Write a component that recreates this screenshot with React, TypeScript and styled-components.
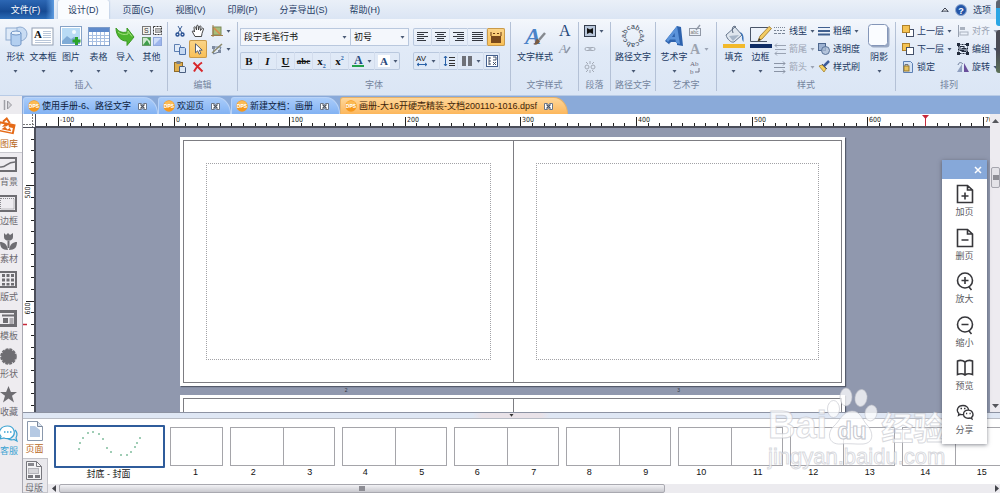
import React from "react";
import styled, { createGlobalStyle, css } from "styled-components";

const Global = createGlobalStyle`
  * { box-sizing: border-box; }
  html, body { margin: 0; height: 100%; }
  #root { height: 100%; }
  body {
    font: 9px/12px "Liberation Sans", "Noto Sans CJK SC", sans-serif;
    color: #1d3a63;
    overflow: hidden;
  }
  button, select {
    font: inherit;
    color: inherit;
    margin: 0;
    padding: 0;
    border: 0;
    background: none;
  }
  button { cursor: pointer; white-space: nowrap; }
  svg { display: block; flex: none; overflow: visible; }
`;

/* ---------- shell ---------- */

const Window = styled.div`
  position: relative;
  display: flex;
  flex-direction: column;
  height: 100%;
  min-height: 480px;
  overflow: hidden;
  background: #dfe8f6;
`;

const MenuBar = styled.nav`
  display: flex;
  height: 19px;
  flex: none;
  background: linear-gradient(#eaf0f8, #dbe5f4);
`;

const FileTab = styled.button`
  width: 54px;
  margin-right: 4px;
  padding-right: 3px;
  color: #fff;
  background: linear-gradient(90deg, transparent 85%, #5d9be0), linear-gradient(#2c67b4, #164a93 60%, #2a6cb8);
`;

const MenuItem = styled.button<{ $active?: boolean }>`
  padding: 0 11px;
  ${(p) =>
    p.$active &&
    css`
      padding: 0 10px;
      margin-right: 3px;
      background: #fafcff;
      border-radius: 2px 2px 0 0;
      box-shadow: 0 0 2px #8ca6cc;
    `}
`;

const MenuTools = styled.div`
  display: flex;
  align-items: center;
  gap: 6px;
  margin-left: auto;
  padding-right: 9px;
`;

const Ribbon = styled.div`
  display: flex;
  flex: none;
  height: 77px;
  padding: 3px 0 4px;
  overflow: hidden;
  background: linear-gradient(#f4f7fc, #e1eaf7 40%, #dbe6f5);
  border-bottom: 1px solid #b8cbe6;
`;

const GroupBox = styled.section<{ $w: number }>`
  display: flex;
  flex-direction: column;
  flex: none;
  width: ${(p) => p.$w}px;
  border-right: 1px solid #b4c1d6;
`;

const GroupBody = styled.div<{ $pad?: number }>`
  display: flex;
  height: 57px;
  padding-left: ${(p) => p.$pad ?? 2}px;
`;

const Caption = styled.div`
  text-align: center;
  color: #74849d;
`;

const BigButton = styled.button<{ $w?: number }>`
  display: flex;
  flex-direction: column;
  align-items: center;
  width: ${(p) => p.$w ?? 27}px;
  height: 54px;
  padding-top: 2px;
  gap: 3px;
  & > svg:last-child:not(:first-child) { margin-top: 4px; }
`;

const SmallGrid = styled.div<{ $cols: string }>`
  display: grid;
  grid-template-columns: ${(p) => p.$cols};
  grid-auto-rows: 18px;
`;

const SmallButton = styled.button<{ $on?: boolean; $off?: boolean }>`
  display: flex;
  align-items: center;
  gap: 3px;
  color: ${(p) => (p.$off ? "#9aa3b3" : "inherit")};
  ${(p) =>
    p.$on &&
    css`
      justify-content: center;
      background: linear-gradient(#fbd58a, #f9bf55);
      box-shadow: inset 0 0 0 1px #c99a4a;
      border-radius: 2px;
    `}
`;

const IconButton = styled(SmallButton)`
  justify-content: center;
`;

const FontGrid = styled.div`
  display: grid;
  grid-template-columns: 169px 92px;
  grid-auto-rows: 18px;
  gap: 6px 4px;
  padding-top: 6px;
  justify-items: start;
`;

const ToolStrip = styled.div<{ $cols: string }>`
  display: grid;
  grid-template-columns: ${(p) => p.$cols};
  height: 18px;
  border-radius: 2px;
  box-shadow: inset 0 0 0 1px #b9c8de;
  & > * + * { border-left: 1px solid #d3dded; }
`;

const Combos = styled.div`
  display: flex;
  width: 100%;
`;

const Combo = styled.div<{ $w: number }>`
  display: flex;
  align-items: center;
  width: ${(p) => p.$w}px;
  height: 18px;
  padding: 0 3px;
  background: #f4f7fc;
  border: 1px solid #b9c8de;
  color: #111;
  select {
    flex: 1;
    min-width: 0;
    appearance: none;
    outline: 0;
  }
  & + & { border-left: 0; }
`;

const Glyph = styled.span<{ $kind?: "italic" | "under" | "strike" }>`
  font: 700 11px/12px "Liberation Serif", serif;
  color: #111;
  ${(p) => p.$kind === "italic" && "font-style: italic;"}
  ${(p) => p.$kind === "under" && "text-decoration: underline;"}
  ${(p) => p.$kind === "strike" && "font-size: 9px; text-decoration: line-through;"}
  sub, sup { font-size: 6px; line-height: 0; color: #2a62a8; }
`;

/* ---------- document tabs ---------- */

const TabRow = styled.div`
  display: flex;
  flex: none;
  height: 18px;
  background: #8aaad9;
`;

const Expander = styled.button`
  display: grid;
  place-items: center;
  width: 22px;
  margin-right: 1px;
  padding-right: 6px;
  background: #ecebef;
`;

const DocTab = styled.div<{ $active?: boolean }>`
  display: flex;
  align-items: center;
  gap: 7px;
  height: 17px;
  margin-top: 1px;
  padding: 0 ${(p) => (p.$active ? 14 : 10)}px 0 4px;
  border: 1px solid ${(p) => (p.$active ? "#e6b169" : "#b9d3f7")};
  border-bottom: 0;
  border-radius: 3px 14px 0 0 / 3px 17px 0 0;
  color: ${(p) => (p.$active ? "#3d1f0a" : "#0c1c3c")};
  background: ${(p) => (p.$active ? "linear-gradient(#ffd79a, #fcb75c)" : "linear-gradient(#a9ccfa, #82b2f3)")};
`;

const TabLabel = styled.button`
  display: flex;
  align-items: center;
  gap: 2px;
`;

/* ---------- workspace ---------- */

const Workspace = styled.div`
  display: flex;
  flex: 1;
  min-height: 0;
`;

const Sidebar = styled.nav`
  display: flex;
  flex-direction: column;
  flex: none;
  width: 23px;
  padding-bottom: 34px;
  background: #eeecf0;
  border-right: 1px solid #a9a9b2;
`;

const SideItem = styled.button<{ $tone?: string; $active?: boolean }>`
  display: flex;
  flex-direction: column;
  align-items: flex-start;
  flex: 1;
  gap: 3px;
  padding-top: 4px;
  color: ${(p) => p.$tone ?? "#6c6a70"};
  ${(p) => p.$active && "background: #fff; box-shadow: 0 1px 0 #c9c9cf;"}
`;

const MainColumn = styled.main`
  display: flex;
  flex-direction: column;
  flex: 1;
  min-width: 0;
`;

const EditArea = styled.div`
  display: grid;
  grid-template: 14px minmax(0, 1fr) / 13px minmax(0, 1fr) 10px;
  flex: 1;
  min-height: 0;
`;

const RulerCell = styled.div<{ $side?: "top" | "left" }>`
  overflow: hidden;
  background: #fff;
  ${(p) => p.$side === "top" && "border-bottom: 2px solid #4b4e5a;"}
  ${(p) => p.$side === "left" && "border-right: 2px solid #4b4e5a;"}
  text { font: 7px "DejaVu Sans Condensed", "Liberation Sans", sans-serif; fill: #222; }
`;

const Canvas = styled.div`
  overflow: hidden;
  padding: 9px 145px 0 144px;
  background: #9098ae;
`;

const VScroll = styled.div`
  display: flex;
  flex-direction: column;
  align-items: center;
  grid-column: 3;
  grid-row: 1 / 3;
  padding: 5px 0 4px;
  background: #edebf0;
`;

const VThumb = styled.div`
  display: grid;
  place-items: center;
  width: 9px;
  height: 21px;
  margin: 44px 0 auto 1px;
  background: #e4e3e8;
  border: 1px solid #a6a6ae;
  border-radius: 2px;
`;

const Sheet = styled.div`
  aspect-ratio: 665 / 249;
  padding: 3px;
  background: #fff;
  box-shadow: 1px 1px 1px #555b6b;
`;

const Spread = styled.div`
  display: grid;
  grid-template-columns: 1fr 1fr;
  height: 100%;
  border: 1px solid #7d7d82;
`;

const Leaf = styled.div`
  padding: 22px;
  & + & { border-left: 1px solid #7d7d82; }
`;

const Margins = styled.div`
  height: 100%;
  border: 1px dotted #a2a2a6;
`;

const SheetNumbers = styled.div`
  display: grid;
  grid-template-columns: 1fr 1fr;
  height: 9px;
  text-align: center;
  font-size: 5px;
  line-height: 8px;
  color: #33363f;
`;

const Splitter = styled.div`
  display: grid;
  place-items: center;
  flex: none;
  height: 7px;
  border-top: 1px solid #8d93a3;
  border-bottom: 1px solid #b9bdc6;
  background: linear-gradient(90deg, #dfe7f4 46%, #e9e2e8 47%, #e9e2e8 53%, #dfe7f4 54%);
`;

/* ---------- page strip ---------- */

const Strip = styled.div`
  display: flex;
  flex: none;
  background: #fff;
`;

const StripTabs = styled.div`
  display: flex;
  flex-direction: column;
  flex: none;
  width: 25px;
`;

const StripTab = styled.button<{ $active?: boolean }>`
  display: flex;
  flex-direction: column;
  align-items: center;
  gap: 2px;
  height: ${(p) => (p.$active ? 39 : 35)}px;
  padding: 2px 2px 0 0;
  color: ${(p) => (p.$active ? "#b8671a" : "#6f6f75")};
  background: ${(p) => (p.$active ? "#fff" : "#e9e8ec")};
  ${(p) => !p.$active && "border: 1px solid #c4c4ca; border-left: 0;"}
`;

const StripBody = styled.div`
  display: flex;
  flex-direction: column;
  flex: 1;
  min-width: 0;
`;

const Thumbs = styled.div`
  display: flex;
  flex: 1;
  overflow: hidden;
  gap: 7px;
  padding: 6px 0 0 6px;
  color: #111;
`;

const ThumbItem = styled.figure<{ $w: number; $cover?: boolean }>`
  flex: none;
  width: ${(p) => p.$w}px;
  margin: ${(p) => (p.$cover ? "0 -2px 0 0" : "2px 0 0")};
`;

const ThumbFrame = styled.div<{ $cols: number; $selected?: boolean }>`
  display: grid;
  grid-template-columns: repeat(${(p) => p.$cols}, 1fr);
  place-items: stretch;
  height: ${(p) => (p.$selected ? 43 : 39)}px;
  border: ${(p) => (p.$selected ? "2px solid #2f5c9b" : "1px solid #a5a5aa")};
  border-radius: ${(p) => (p.$selected ? 1 : 0)}px;
  & > span + span { border-left: 1px solid #a5a5aa; }
`;

const ThumbLabels = styled.figcaption<{ $cols: number }>`
  display: grid;
  grid-template-columns: repeat(${(p) => p.$cols}, 1fr);
  margin: 0 -3px 0 -5px;
  padding-top: 1px;
  text-align: center;
  line-height: 11px;
`;

const HScroll = styled.div`
  display: flex;
  align-items: center;
  flex: none;
  height: 9px;
  padding: 0 1px 0 4px;
  background: #ecebef;
`;

const HThumb = styled.div`
  display: grid;
  place-items: center;
  width: 64%;
  height: 9px;
  margin: 0 auto 0 3px;
  background: linear-gradient(#f2f2f5, #c9c9cf);
  border: 1px solid #a9a9b0;
  border-radius: 2px;
`;

const Grip = styled.i`
  width: 6px;
  height: 5px;
  background: #8d8d94;
`;

/* ---------- floating layers ---------- */

const Palette = styled.aside`
  position: absolute;
  top: 160px;
  right: 13px;
  z-index: 3;
  width: 45px;
  background: #fff;
  box-shadow: 0 1px 4px rgba(40, 45, 60, 0.55);
`;

const PaletteHead = styled.div`
  display: flex;
  justify-content: flex-end;
  align-items: center;
  height: 19px;
  padding-right: 5px;
  background: #86a8d9;
`;

const PaletteList = styled.div`
  display: flex;
  flex-direction: column;
  height: 265px;
  padding-bottom: 4px;
`;

const PaletteItem = styled.button`
  display: flex;
  flex-direction: column;
  align-items: center;
  flex: 1;
  gap: 3px;
  padding-top: 6px;
  color: #5b5b5f;
`;

const Watermark = styled.div`
  position: absolute;
  right: 53px;
  bottom: 24px;
  z-index: 2;
  width: 179px;
  color: rgba(255, 255, 255, 0.75);
  -webkit-text-stroke: 1px rgba(190, 192, 200, 0.6);
  pointer-events: none;
`;

const MarkRow = styled.div`
  display: flex;
  align-items: flex-end;
  height: 58px;
  font: 700 38px/40px "Liberation Sans", sans-serif;
`;

const MarkCjk = styled.span`
  margin-left: 4px;
  font: 700 32px/38px "Noto Sans CJK SC", sans-serif;
`;

const MarkUrl = styled.div`
  font: 22px/24px "Liberation Sans", sans-serif;
`;

const EdgeWidget = styled.div`
  position: absolute;
  top: 0;
  right: 0;
  z-index: 4;
  display: flex;
  flex-direction: column;
  gap: 4px;
  width: 4px;
`;

const EdgeBlock = styled.i<{ $h: number; $bg: string }>`
  height: ${(p) => p.$h}px;
  border-radius: 3px 0 0 3px;
  background: ${(p) => p.$bg};
`;

/* ---------- icons ---------- */

const Svg = ({ w, h = w, children, ...rest }: { w: number; h?: number; children: React.ReactNode } & React.SVGProps<SVGSVGElement>) => (
  <svg width={w} height={h} viewBox={`0 0 ${w} ${h}`} fill="none" aria-hidden {...rest}>
    {children}
  </svg>
);

const Arrow = ({ c = "#4a5a75" }: { c?: string }) => (
  <Svg w={5} h={3}><path d="M0.5 0h4L2.5 2.8z" fill={c} /></Svg>
);

const big = {
  shape: (
    <Svg w={24}>
      <circle cx="16" cy="10" r="7" fill="#c9dcf3" stroke="#8fabd0" />
      <rect x="2" y="4" width="11" height="12" fill="#dfeaf8" stroke="#8fabd0" />
      <path d="M7 9v11c0 2.600 10 2.600 10 0V9z" fill="#b3cff0" stroke="#7195c6" />
      <ellipse cx="12" cy="9" rx="5" ry="2" fill="#e7f1fc" stroke="#7195c6" />
    </Svg>
  ),
  textbox: (
    <Svg w={24}>
      <rect x="1" y="4" width="21" height="17" fill="#fff" stroke="#93a0b3" />
      <text x="3" y="14" fontSize="11" fontWeight="700" fontFamily="Liberation Serif" fill="#111">A</text>
      <path d="M12 7.500h8M12 9.500h8M12 11.500h8M12 13.500h8M4 16.500h16M4 18.500h16" stroke="#b9c6d8" />
    </Svg>
  ),
  picture: (
    <Svg w={24}>
      <rect x="1.500" y="2.500" width="21" height="19" fill="#fff" stroke="#86a2c6" />
      <rect x="3" y="4" width="18" height="16" fill="#b9dbf5" />
      <path d="M3 17l5-5 4 3 3-2 6 4v3H3z" fill="#7fabd6" />
      <circle cx="15" cy="8" r="2" fill="#f4fbff" />
      <path d="M17.500 13v8M13.500 17h8" stroke="#2aa32a" strokeWidth="3" />
    </Svg>
  ),
  table: (
    <Svg w={24}>
      <rect x="1.500" y="3.500" width="21" height="18" fill="#fff" stroke="#7d9cc9" />
      <rect x="2" y="4" width="20" height="4" fill="#5f8acb" />
      <path d="M5.500 8v13M9.500 8v13M13.500 8v13M17.500 8v13M2 11.500h20M2 14.500h20M2 17.500h20" stroke="#a9c0e2" />
    </Svg>
  ),
  import: (
    <Svg w={24}>
      <path d="M3 4c3 4 6 5 11 4V4l7 9-7 8.500V17C8 17.500 3 12 3 4z" fill="#4db52f" stroke="#3c9a24" />
      <path d="M5 8c3 2.500 6 3 10 2V7l4 5.500" stroke="#a3e07e" />
    </Svg>
  ),
  other: (
    <Svg w={24}>
      <rect x="2.500" y="2.500" width="8" height="8" fill="#f2f2ee" stroke="#777" />
      <text x="4" y="9" fontSize="7" fontFamily="Liberation Sans" fill="#333">S</text>
      <rect x="13.500" y="2.500" width="8" height="8" fill="#fff" stroke="#333" strokeDasharray="2 1" />
      <path d="M15.500 4.500h5v4h-5z" fill="#bbb" stroke="#555" strokeDasharray="1 1" />
      <rect x="2.500" y="13.500" width="8" height="8" fill="#cfe8cf" stroke="#6a9a6a" />
      <path d="M3 21l4-5 3 5zM7 14h3v3z" fill="#3f9e4a" />
      <rect x="13.500" y="13.500" width="8" height="8" fill="#cddcf8" stroke="#90a8dc" />
      <path d="M14 21l7-7v7z" fill="#9db5ec" />
    </Svg>
  ),
  textStyle: (
    <Svg w={24}>
      <text x="2" y="20" fontSize="24" fontWeight="700" fontFamily="Liberation Serif" fontStyle="italic" fill="#4b83c8">A</text>
      <path d="M22 9l-6 7" stroke="#85898f" strokeWidth="2.500" />
      <path d="M14 14.500l3 2.500c-1 3.500-4 4-6.500 3.500 2-1 1.500-4 3.500-6z" fill="#7a5c42" />
    </Svg>
  ),
  pathText: (
    <Svg w={24}>
      <g fontSize="7" fontFamily="Liberation Sans" fill="#2e3a4d" textAnchor="middle">
        {"abcabcabcabc".split("").map((ch, i) => (
          <text key={i} x="12" y="5" transform={`rotate(${i * 30} 12 12)`}>{ch}</text>
        ))}
      </g>
    </Svg>
  ),
  wordArt: (
    <Svg w={24}>
      <path d="M3 17L15 2l4 1 2 19-6-1v-3H9l-2 2 1 1z" fill="#2d62ad" />
      <path d="M4 16L15 2l3 18-4-1-.5-3.500H8L6 18zM10 13h3l-.5-4z" fill="#5b93da" fillRule="evenodd" />
    </Svg>
  ),
  fill: (
    <Svg w={24}>
      <path d="M4 11l9-8 7 8-8 7c-3 1-7-3-8-7z" fill="#dfe6ee" stroke="#66768c" />
      <path d="M7 12l10-1-6 6z" fill="#a7b6c8" />
      <path d="M11 9c-2-6 1-8 3-6" stroke="#55647a" />
      <path d="M18 8c3 1 4 4 3.500 10-1-1-2-4-1.500-6z" fill="#3b73b9" />
      <rect x="1" y="20" width="22" height="4" fill="#f2b92b" />
    </Svg>
  ),
  border: (
    <Svg w={24}>
      <path d="M19 3.500H1.500v14H18" stroke="#4a5568" />
      <path d="M9 17l2-5 9-9.500 2.500 2L13 15z" fill="#f3cc63" stroke="#98711f" strokeWidth=".8" />
      <path d="M9 17l1-3 2 2z" fill="#333" />
      <rect x="1" y="20" width="22" height="4" fill="#0f2d66" />
    </Svg>
  ),
  shadow: (
    <Svg w={24}>
      <rect x="3.500" y="2.500" width="19" height="21" rx="3" fill="#9aa9c4" />
      <rect x="1.500" y=".5" width="19" height="21" rx="3" fill="#fafcff" stroke="#8496b8" />
    </Svg>
  ),
};

const small = {
  cut: <Svg w={12}><path d="M4 1l4 7M8 1L4 8" stroke="#3c5f96" /><circle cx="3.500" cy="9.500" r="1.500" stroke="#264f92" strokeWidth="1.400" /><circle cx="8.500" cy="9.500" r="1.500" stroke="#264f92" strokeWidth="1.400" /></Svg>,
  hand: <Svg w={14}><path d="M4 12.500L1.500 8C1 6.500 2.500 6.500 3.500 8L3 3.500c0-1 1.500-1 1.700 0L5.500 6l.2-4c0-1 1.500-1 1.600 0L7.500 6l1-3.500c.2-1 1.600-.8 1.500.3L9.500 6.500l1.500-2c.5-.8 1.700-.3 1.500.5L11 9.500l-.5 3z" fill="#fff" stroke="#333" strokeWidth=".9" /></Svg>,
  crop: <Svg w={12}><rect x="2" y="2" width="8" height="8" fill="#a8bd79" stroke="#7d8a5a" /><path d="M0 10.500h12M2 0v12" stroke="#a07c4a" /><path d="M3 3l6 6" stroke="#e0874a" strokeWidth="1.500" /></Svg>,
  copy: <Svg w={12}><path d="M.5 1.500h5l1 1v6h-6z" fill="#dfeaf8" stroke="#5d7fb2" /><path d="M5.500 4.500h5l1 1v6h-6z" fill="#c5d8f1" stroke="#4a70aa" /></Svg>,
  pointer: <Svg w={12}><path d="M3.500.8v9l2.200-2 1.500 3.400 1.600-.8-1.500-3.200h2.900z" fill="#fff" stroke="#44506a" strokeWidth=".9" /></Svg>,
  node: <Svg w={12}><path d="M2.500 11L3 4h7l-2 5z" stroke="#6b7c96" /><path d="M1 10L11 1" stroke="#8c8a6c" strokeWidth="1.500" /><path d="M1 3h3v3H1zM7 7h3v3H7z" fill="#7d8aa0" /></Svg>,
  paste: <Svg w={12}><rect x=".5" y="1.500" width="8" height="9" fill="#e2b04d" stroke="#8f6b28" /><rect x="2.500" y="0" width="4" height="3" fill="#76808e" /><path d="M5.500 5.500h5l1 1v5h-6z" fill="#dbe7f5" stroke="#4a5f80" /></Svg>,
  remove: <Svg w={12}><path d="M1.500 1.500l9 9M10 1.500C6 4 4 7 2 10.500" stroke="#d8272b" strokeWidth="2" /></Svg>,
  bigA: <Svg w={12}><text x="0" y="11" fontSize="16" fontFamily="Liberation Serif" fill="#27497c">A</text></Svg>,
  penA: <Svg w={12}><text x="0" y="10" fontSize="13" fontFamily="Liberation Serif" fontStyle="italic" fill="#8f98a8">A</text><path d="M11 4l-4 6" stroke="#8f98a8" strokeWidth="1.500" /></Svg>,
  para: <Svg w={12}><rect x=".5" y=".5" width="11" height="11" fill="#b8c6da" stroke="#333d4e" /><path d="M3 3l3 1.500L9 3v6L6 7.500 3 9z" fill="#111" /></Svg>,
  link: <Svg w={12}><rect x="1" y="4.500" width="6" height="3" rx="1.500" stroke="#a4abb7" /><rect x="5" y="4.500" width="6" height="3" rx="1.500" stroke="#a4abb7" /></Svg>,
  unlink: <Svg w={12}><rect x="1" y="4" width="4" height="4" rx="2" stroke="#a4abb7" /><rect x="7" y="4" width="4" height="4" rx="2" stroke="#a4abb7" /><path d="M6 0v3M6 9v3M2 1l2 2M10 1L8 3M2 11l2-2M10 11L8 9" stroke="#a4abb7" /></Svg>,
  editAbc: <Svg w={12}><rect x=".5" y="3.500" width="11" height="7" stroke="#9098a6" /><text x="1.500" y="9" fontSize="5" fontFamily="Liberation Sans" fill="#777">abc</text><path d="M7 5l4-5" stroke="#9098a6" strokeWidth="1.300" /></Svg>,
  shadowA: <Svg w={12}><text x="1" y="11" fontSize="14" fontWeight="700" fontFamily="Liberation Serif" fill="#9ca3af">A</text></Svg>,
  abSwap: <Svg w={12}><text x="1" y="5" fontSize="7" fontFamily="Liberation Serif" fill="#667">Ab</text><text x="1" y="13" fontSize="7" fontFamily="Liberation Serif" fill="#667">b</text><path d="M6 11h4V7" stroke="#778" /></Svg>,
  lineType: <Svg w={12}><path d="M0 2.500h12" stroke="#7b8798" strokeDasharray="1 1" /><path d="M0 5.500h12" stroke="#7b8798" strokeDasharray="2 1" /><path d="M0 8.500h12" stroke="#7b8798" strokeDasharray="3 1" /></Svg>,
  tail: <Svg w={12}><path d="M1 2.500h11M1 6.500h11M1 10.500h11M3 .5L1 2.500l2 2M3 8.500l-2 2 2 2" stroke="#9aa3b3" /></Svg>,
  head: <Svg w={12}><path d="M0 2.500h11M0 6.500h11M0 10.500h11M9 .5l2 2-2 2M9 8.500l2 2-2 2" stroke="#8a94a5" /></Svg>,
  weight: <Svg w={12}><path d="M0 2.500h12" stroke="#41608f" /><path d="M0 6h12" stroke="#41608f" strokeWidth="2" /><path d="M0 9.500h12" stroke="#41608f" strokeWidth="2" /></Svg>,
  opacity: <Svg w={12}><rect x=".5" y=".5" width="7" height="7" fill="#9db2d2" stroke="#4d678f" /><circle cx="7.500" cy="7.500" r="4" fill="#a9bad3" fillOpacity=".8" stroke="#5a7399" /></Svg>,
  brush: <Svg w={12}><path d="M11 0L6 5" stroke="#3c5c9a" strokeWidth="2.500" /><path d="M1 5l3-1 4 4-2 3z" fill="#f3d060" stroke="#a5812d" strokeWidth=".8" /><path d="M4 3l5 5" stroke="#44557a" /></Svg>,
  front: <Svg w={12}><rect x="4.500" y="4.500" width="7" height="7" fill="#fff" stroke="#44506a" /><rect x=".5" y=".5" width="7" height="7" fill="#f5c353" stroke="#b0812a" /></Svg>,
  back: <Svg w={12}><rect x=".5" y=".5" width="7" height="7" fill="#f5c353" stroke="#b0812a" /><rect x="4.500" y="4.500" width="7" height="7" fill="#fff" stroke="#44506a" /></Svg>,
  lock: <Svg w={12}><path d="M1.500.5h7l2 2v9h-9z" fill="#d4e2f4" stroke="#5c80b4" /><rect x="2" y="5" width="5" height="5" fill="#e6c25f" stroke="#9b7b2c" /><path d="M3 5V3.500h3V5" stroke="#777" /></Svg>,
  align: <Svg w={12}><path d="M1.500 0v12" stroke="#99a2b1" /><rect x="3" y="2" width="5" height="3" fill="#aab2bf" /><rect x="3" y="7" width="8" height="3" stroke="#aab2bf" /></Svg>,
  group: <Svg w={12}><rect x="1.500" y="1.500" width="9" height="9" stroke="#222b3c" strokeDasharray="2 1" /><rect x="3" y="3.500" width="4" height="4" stroke="#222b3c" /><rect x="5" y="5.500" width="4" height="3" stroke="#222b3c" /><path d="M0 0h3v3H0zM9 0h3v3H9zM0 9h3v3H0zM9 9h3v3H9z" fill="#222b3c" /></Svg>,
  rotate: <Svg w={12}><path d="M5 3v8H0z" fill="#8f9fc0" /><path d="M7 2l5 9H7z" fill="#6a4f9c" /><path d="M1 4c1-3 3-3 5-1" stroke="#6b7a98" /></Svg>,
  lineGap: <Svg w={12}><path d="M2.500 1v10M1 3l1.500-2L4 3M1 9l1.500 2L4 9" stroke="#2a62a8" /><path d="M6 2.500h6M6 5.500h6M6 8.500h6M6 10.500h6" stroke="#333" /></Svg>,
  columns: <Svg w={12}><path d="M1 2h4M1 4h4M1 6h4M1 8h4M1 10h4M7 2h4M7 4h4M7 6h4M7 8h4M7 10h4" stroke="#4a4a4f" strokeWidth="1.400" /></Svg>,
  paraBox: <Svg w={12}><rect x=".5" y=".5" width="11" height="11" fill="#fff" stroke="#44608e" /><path d="M3 2v8M3 3h2M3 6h2M3 9h2M7 2h3v3M7 5h3M7 7l3 3M10 7l-3 3" stroke="#33435e" strokeWidth=".9" /></Svg>,
  avGap: <Svg w={12}><text x="0" y="6" fontSize="8" fontFamily="Liberation Sans" fill="#222">AV</text><path d="M1 9.500h10M3 8L1 9.500 3 11M9 8l2 1.500L9 11" stroke="#2a62a8" /></Svg>,
  fontColor: <Svg w={12}><text x="2" y="9" fontSize="12" fontWeight="700" fontFamily="Liberation Serif" fill="#27497c">A</text><rect y="10" width="12" height="2" fill="#22a04a" /></Svg>,
  highlight: <Svg w={12}><rect width="12" height="12" fill="#fff" /><text x="2" y="10" fontSize="11" fontWeight="700" fontFamily="Liberation Serif" fill="#27497c">A</text></Svg>,
  fit: <Svg w={12}><path d="M1 1v4M11 1v4M3 2.500h2M7 2.500h2" stroke="#6b3b12" /><rect x="1" y="5" width="10" height="7" fill="#7a4a1c" /></Svg>,
};

const AlignIcon = ({ rows }: { rows: [number, number][] }) => (
  <Svg w={11} h={10}>
    {rows.map(([x, w], i) => <path key={i} d={`M${x} ${i * 2 + 0.5}h${w}`} stroke="#33373f" />)}
  </Svg>
);

const Dps = () => (
  <Svg w={12}>
    <circle cx="6" cy="6" r="5.700" fill="#f6981c" />
    <ellipse cx="6" cy="4" rx="4.500" ry="3" fill="#fbbb55" />
    <text x="6" y="8" fontSize="5" fontWeight="700" fontFamily="Liberation Sans" fill="#fff" textAnchor="middle">DPS</text>
  </Svg>
);

const CloseBox = () => (
  <Svg w={9}>
    <path d="M.5 1.500h2.500l1.500 1 1.500-1h2.500v6H6l-1.500-1-1.500 1H.5z" fill="#fff" stroke="#6b7586" />
    <path d="M2.500 2.500l4 4M6.500 2.500l-4 4" stroke="#4a5362" strokeWidth="1.200" />
  </Svg>
);

const side: Record<string, React.ReactNode> = {
  gallery: <Svg w={17}><g transform="rotate(12 8 9)"><path d="M-1 5h16v10H-1z" fill="#e56a17" /><path d="M0 13.500V7h4l-2 3 4-1 2-2 1 2h4v4.500z" fill="#fff" /><path d="M2 12.500l3-3 3 2 2-2 2 3z" fill="#e56a17" /><path d="M2 5l3-4 4 4" stroke="#e56a17" strokeWidth="2" /></g></Svg>,
  backdrop: <Svg w={17}><path d="M-1 2h17v13H-1" stroke="#6e6d72" strokeWidth="2" /><path d="M0 11c7 1 6-5 15-5" stroke="#6e6d72" strokeWidth="1.500" /></Svg>,
  frame: <Svg w={17}><path d="M0 1h16v15H0" stroke="#6e6d72" strokeWidth="2" /><path d="M.5 3v11M1 3.500h13v10.500H1" stroke="#8b8a8f" strokeDasharray="1 1" /></Svg>,
  material: <Svg w={17}><path d="M4 0l2 2 2-2 2 2 3-2v4c0 5-9 5-9 0zM7.500 8h2v7h-2z" fill="#6e6d72" /><path d="M0 9c4 0 7 2 8 8-6 0-8-3-8-8zM17 9c-4 0-7 2-8 8 6 0 8-3 8-8z" fill="#6e6d72" /></Svg>,
  layout: <Svg w={17}><path d="M0 1h16v15H0" stroke="#6e6d72" strokeWidth="2" /><path d="M2 3h3v3H2zM6.500 3h3v3h-3zM11 3h3v3h-3zM2 7.500h3v3H2zM6.500 7.500h3v3h-3zM11 7.500h3v3h-3zM2 12h3v2.500H2zM6.500 12h3v2.500h-3zM11 12h3v2.500h-3z" fill="#6e6d72" /></Svg>,
  template: <Svg w={17}><path d="M0 1.500h15.500v14H0" stroke="#6e6d72" strokeWidth="3" /><path d="M2 5.500h12" stroke="#6e6d72" strokeWidth="2" /><path d="M3 8h5v5H3z" fill="#6e6d72" /><path d="M9.500 9h4M9.500 11h4M9.500 13h4" stroke="#6e6d72" /></Svg>,
  blob: <Svg w={17}><circle cx="8.500" cy="8.500" r="7.200" fill="#6e6d72" /><circle cx="8.500" cy="8.500" r="7.500" stroke="#6e6d72" strokeWidth="1.600" strokeDasharray="3 1" /></Svg>,
  star: <Svg w={17}><path d="M8.500 0l2.400 6H17l-5 3.800 2 6.700-5.500-4-5.500 4 2-6.700L0 6h6.100z" fill="#6e6d72" /></Svg>,
  service: <Svg w={18} h={17}><path d="M11 13c-1 .8-5 1-7 0L0 14l1-2.500C-3 7 1 1 7.500 1S17 9 11 13z" fill="#fff" stroke="#3ba3d2" strokeWidth="1.200" /><path d="M15 5c4 4 1 7 1 8l1 3-3-1.500c-2 .8-4 .5-6-.8" stroke="#3ba3d2" strokeWidth="1.200" /><path d="M4 7h1.500M7 7h1.500M10 7h1.500" stroke="#3ba3d2" strokeWidth="1.500" /></Svg>,
};

const P = { stroke: "#37373b", strokeWidth: 1.6 };
const palette: Record<string, React.ReactNode> = {
  add: <Svg w={18}><path d="M1.500.5h10L16.500 5v12.500h-15zM11.500.500V5h5M9 7.500v7M5.500 11h7" {...P} /></Svg>,
  del: <Svg w={18}><path d="M1.500.5h10L16.500 5v12.500h-15zM11.500.500V5h5M5.500 11h7" {...P} /></Svg>,
  zoomIn: <Svg w={18}><circle cx="9" cy="8.500" r="7.500" {...P} /><path d="M9 5v7M5.500 8.500h7M13 15l2.500 3" {...P} /></Svg>,
  zoomOut: <Svg w={18}><circle cx="9" cy="8.500" r="7.500" {...P} /><path d="M5.500 8.500h7M13 15l2.500 3" {...P} /></Svg>,
  preview: <Svg w={18}><path d="M9 3C7 1.500 4 1 1.500 2v13.500C4 14.500 7 14.500 9 16c2-1.500 5-1.500 7.500-.5V2C14 1 11 1.500 9 3zM9 3v13" {...P} /></Svg>,
  share: <Svg w={18}><path d="M8 11.500c-1.500.3-2.500.2-3.500-.2L2.500 12.500l.4-2C-.5 7 2 2.500 7 2.500c3 0 5.500 2 5.500 4.500" {...P} strokeWidth={1.300} /><path d="M15.500 14.500l.5 1.500-2-1c-3 .8-6.500-.5-6.500-3.500s2-4.300 4.800-4.300c4.500 0 6.200 5 3.200 7.300z" {...P} strokeWidth={1.300} /><path d="M4.500 5.500h1.500M8 5.500h1.500M10 10.500h1.200M13.500 10.500h1.200" {...P} /></Svg>,
};

/* ---------- parts ---------- */

const Group = ({ label, w, pad, children }: { label: string; w: number; pad?: number; children: React.ReactNode }) => (
  <GroupBox $w={w} aria-label={label}>
    <GroupBody $pad={pad}>{children}</GroupBody>
    <Caption>{label}</Caption>
  </GroupBox>
);

const Big = ({ icon, label, w, drop = true }: { icon: React.ReactNode; label: string; w?: number; drop?: boolean }) => (
  <BigButton $w={w}>
    {icon}
    <span>{label}</span>
    {drop && <Arrow />}
  </BigButton>
);

const Small = ({ icon, label, drop, off }: { icon: React.ReactNode; label?: string; drop?: boolean; off?: boolean }) => (
  <SmallButton $off={off}>
    {icon}
    {label && <span>{label}</span>}
    {drop && <Arrow c={off ? "#9aa3b3" : undefined} />}
  </SmallButton>
);

const STEP = 11.56;

const TopRuler = () => (
  <RulerCell $side="top">
    <svg width="1800" height="12">
      {Array.from({ length: 150 }, (_, i) => {
        const x = Math.round(23 + (i - 2) * STEP) - 0.5;
        const major = (i - 2) % 10 === 0;
        return (
          <g key={i}>
            <path d={`M${x} ${major ? 3 : 9}V13`} stroke="#222" />
            {major && <text x={x + 1.5} y="8">{((i - 2) / 10 - 1) * 100}</text>}
          </g>
        );
      })}
      <path d="M889.500 3v10" stroke="#c8283a" />
      <path d="M886 1h7l-3.500 4z" fill="#c8283a" />
    </svg>
  </RulerCell>
);

const LeftRuler = () => (
  <RulerCell $side="left">
    <svg width="11" height="1400">
      {Array.from({ length: 120 }, (_, i) => {
        const y = Math.round(57 + (i - 5) * STEP) + 0.5;
        const major = (i - 5) % 10 === 0;
        return (
          <g key={i}>
            <path d={`M${major ? 3 : 8} ${y}H12`} stroke="#222" />
            {major && <text transform={`translate(7 ${y + 13}) rotate(-90)`}>{500 + (i - 5) * 10}</text>}
          </g>
        );
      })}
      <path d="M0 196.500h4" stroke="#c8283a" strokeWidth="1.500" />
    </svg>
  </RulerCell>
);

const SheetView = () => (
  <Sheet>
    <Spread>
      <Leaf><Margins /></Leaf>
      <Leaf><Margins /></Leaf>
    </Spread>
  </Sheet>
);

const docs = ["使用手册-6、路径文字", "欢迎页", "新建文档：画册", "画册-大16开硬壳精装-文档200110-1016.dpsf"];

const sideItems: [string, string, string?][] = [
  ["gallery", "图库", "#b8671a"],
  ["backdrop", "背景"],
  ["frame", "边框"],
  ["material", "素材"],
  ["layout", "版式"],
  ["template", "模板"],
  ["blob", "形状"],
  ["star", "收藏"],
  ["service", "客服", "#3ba3d2"],
];

const paletteItems = [["add", "加页"], ["del", "删页"], ["zoomIn", "放大"], ["zoomOut", "缩小"], ["preview", "预览"], ["share", "分享"]];

const curve = [[23, 22], [24, 16], [27, 11], [32, 6], [37, 5], [43, 7], [47, 12], [51, 21], [55, 25], [65, 28], [71, 28], [75, 25], [79, 20], [81, 16], [84, 11]];

export default function App() {
  return (
    <Window>
      <Global />
      <MenuBar>
        <FileTab>文件(F)</FileTab>
        <MenuItem $active>设计(D)</MenuItem>
        <MenuItem>页面(G)</MenuItem>
        <MenuItem>视图(V)</MenuItem>
        <MenuItem>印刷(P)</MenuItem>
        <MenuItem>分享导出(S)</MenuItem>
        <MenuItem>帮助(H)</MenuItem>
        <MenuTools>
          <button aria-label="collapse"><Svg w={8} h={6}><path d="M.8 4.500L4 1l3.200 3.500c-2-.6-4.400-.6-6.400 0z" fill="#fff" stroke="#333b4c" /></Svg></button>
          <button aria-label="help"><Svg w={12}><circle cx="6" cy="6" r="5.500" fill="#2456a8" stroke="#8fa8d0" /><text x="6" y="9.500" fontSize="9" fontWeight="700" textAnchor="middle" fill="#fff">?</text></Svg></button>
          <button>选项</button>
        </MenuTools>
      </MenuBar>

      <Ribbon>
        <Group label="插入" w={168}>
          <Big icon={big.shape} label="形状" />
          <Big icon={big.textbox} label="文本框" w={28} />
          <Big icon={big.picture} label="图片" w={28} />
          <Big icon={big.table} label="表格" />
          <Big icon={big.import} label="导入" w={26} />
          <Big icon={big.other} label="其他" />
        </Group>
        <Group label="编辑" w={70} pad={3}>
          <SmallGrid $cols="18px 18px 28px">
            <IconButton aria-label="cut">{small.cut}</IconButton>
            <IconButton aria-label="hand">{small.hand}</IconButton>
            <IconButton aria-label="crop">{small.crop}<Arrow /></IconButton>
            <IconButton aria-label="copy">{small.copy}</IconButton>
            <IconButton aria-label="select" $on>{small.pointer}</IconButton>
            <IconButton aria-label="node">{small.node}<Arrow /></IconButton>
            <IconButton aria-label="paste">{small.paste}</IconButton>
            <IconButton aria-label="delete">{small.remove}</IconButton>
          </SmallGrid>
        </Group>
        <Group label="字体" w={273}>
          <FontGrid>
            <Combos>
              <Combo $w={111}><select aria-label="font"><option>段宁毛笔行书</option></select><Arrow /></Combo>
              <Combo $w={58}><select aria-label="size"><option>初号</option></select><Arrow /></Combo>
            </Combos>
            <ToolStrip $cols="18px 18px 18px 19px 19px">
              <IconButton aria-label="left"><AlignIcon rows={[[0, 11], [0, 7], [0, 11], [0, 7], [0, 9]]} /></IconButton>
              <IconButton aria-label="center"><AlignIcon rows={[[0, 11], [2, 7], [0, 11], [2, 7], [1, 9]]} /></IconButton>
              <IconButton aria-label="right"><AlignIcon rows={[[0, 11], [4, 7], [0, 11], [4, 7], [2, 9]]} /></IconButton>
              <IconButton aria-label="justify"><AlignIcon rows={[[0, 11], [0, 11], [0, 11], [0, 11], [0, 11]]} /></IconButton>
              <IconButton aria-label="distribute" $on>{small.fit}</IconButton>
            </ToolStrip>
            <ToolStrip $cols="repeat(6, 18px) 26px 26px">
              <IconButton><Glyph>B</Glyph></IconButton>
              <IconButton><Glyph $kind="italic">I</Glyph></IconButton>
              <IconButton><Glyph $kind="under">U</Glyph></IconButton>
              <IconButton><Glyph $kind="strike">abc</Glyph></IconButton>
              <IconButton><Glyph>x<sub>2</sub></Glyph></IconButton>
              <IconButton><Glyph>x<sup>2</sup></Glyph></IconButton>
              <IconButton aria-label="color">{small.fontColor}<Arrow /></IconButton>
              <IconButton aria-label="highlight">{small.highlight}<Arrow /></IconButton>
            </ToolStrip>
            <ToolStrip $cols="26px 18px 26px 17px">
              <IconButton aria-label="spacing">{small.avGap}<Arrow /></IconButton>
              <IconButton aria-label="line height">{small.lineGap}</IconButton>
              <IconButton aria-label="columns">{small.columns}<Arrow /></IconButton>
              <IconButton aria-label="paragraph">{small.paraBox}</IconButton>
            </ToolStrip>
          </FontGrid>
        </Group>
        <Group label="文字样式" w={68} pad={4}>
          <Big icon={big.textStyle} label="文字样式" w={40} drop={false} />
          <SmallGrid $cols="20px">
            <IconButton aria-label="style">{small.bigA}</IconButton>
            <IconButton aria-label="edit style">{small.penA}</IconButton>
          </SmallGrid>
        </Group>
        <Group label="段落" w={32} pad={5}>
          <SmallGrid $cols="24px">
            <Small icon={small.para} drop />
            <Small icon={small.link} off />
            <Small icon={small.unlink} off />
          </SmallGrid>
        </Group>
        <Group label="路径文字" w={45}>
          <Big icon={big.pathText} label="路径文字" w={40} />
        </Group>
        <Group label="艺术字" w={61} pad={3}>
          <Big icon={big.wordArt} label="艺术字" w={30} />
          <SmallGrid $cols="26px">
            <Small icon={small.editAbc} off />
            <Small icon={small.shadowA} off drop />
            <Small icon={small.abSwap} off />
          </SmallGrid>
        </Group>
        <Group label="样式" w={179} pad={3}>
          <Big icon={big.fill} label="填充" />
          <Big icon={big.border} label="边框" />
          <SmallGrid $cols="44px 46px">
            <Small icon={small.lineType} label="线型" drop />
            <Small icon={small.weight} label="粗细" drop />
            <Small icon={small.tail} label="箭尾" drop off />
            <Small icon={small.opacity} label="透明度" />
            <Small icon={small.head} label="箭头" drop off />
            <Small icon={small.brush} label="样式刷" />
          </SmallGrid>
          <Big icon={big.shadow} label="阴影" w={30} />
        </Group>
        <Group label="排列" w={107} pad={6}>
          <SmallGrid $cols="55px 46px">
            <Small icon={small.front} label="上一层" drop />
            <Small icon={small.align} label="对齐" drop off />
            <Small icon={small.back} label="下一层" drop />
            <Small icon={small.group} label="编组" drop />
            <Small icon={small.lock} label="锁定" />
            <Small icon={small.rotate} label="旋转" drop />
          </SmallGrid>
        </Group>
      </Ribbon>

      <TabRow>
        <Expander aria-label="expand"><Svg w={10}><path d="M1.500 0v10" stroke="#a0a0a6" strokeWidth="1.500" /><path d="M4.500 1l4 4-4 4z" fill="#d4d4d8" stroke="#98989e" /></Svg></Expander>
        {docs.map((name, i) => (
          <DocTab key={name} $active={i === 3}>
            <TabLabel><Dps />{name}</TabLabel>
            <button aria-label={`close ${name}`}><CloseBox /></button>
          </DocTab>
        ))}
      </TabRow>

      <Workspace>
        <Sidebar>
          {sideItems.map(([id, label, tone], i) => (
            <SideItem key={id} $tone={tone} $active={i === 0}>{side[id]}<span>{label}</span></SideItem>
          ))}
        </Sidebar>
        <MainColumn>
          <EditArea>
            <RulerCell><Svg w={13} h={14}><path d="M9.500 0v14M0 10.500h13" stroke="#777" strokeDasharray="2 1" /><path d="M12.500 0v14M0 13.500h13" stroke="#4b4e5a" /></Svg></RulerCell>
            <TopRuler />
            <LeftRuler />
            <Canvas>
              <SheetView />
              <SheetNumbers><span>2</span><span>3</span></SheetNumbers>
              <SheetView />
            </Canvas>
            <VScroll>
              <Svg w={7} h={4}><path d="M0 4h7L3.500 0z" fill="#55565c" /></Svg>
              <VThumb><Grip /></VThumb>
              <Svg w={7} h={4}><path d="M0 0h7L3.500 4z" fill="#55565c" /></Svg>
            </VScroll>
          </EditArea>
          <Splitter><Arrow c="#333" /></Splitter>
          <Strip>
            <StripTabs>
              <StripTab $active>
                <Svg w={16} h={20}><path d="M.5.5h10l5 5v14H.5z" fill="#fff" stroke="#8a98ac" /><path d="M10.500.5v5h5" stroke="#7a889c" fill="#dde6f1" /><path d="M3 5h5l5 4v7H3z" fill="#b5c9e3" /></Svg>
                页面
              </StripTab>
              <StripTab>
                <Svg w={16} h={19}><path d="M.5.5h10l5 5v13H.5z" fill="#f3f3f5" stroke="#77777d" /><path d="M10.500.5v5h5" stroke="#77777d" /><rect x="2" y="2" width="6" height="3" fill="#88888e" /><rect x="2.500" y="7.500" width="10" height="5" fill="#d6d6da" stroke="#b4b4ba" /><path d="M2 14h5v3H2zM9 14h5v3H9z" fill="#77777d" /></Svg>
                母版
              </StripTab>
            </StripTabs>
            <StripBody>
              <Thumbs>
                <ThumbItem $w={111} $cover>
                  <ThumbFrame $cols={1} $selected>
                    <Svg w={107} h={39}>{curve.map(([x, y], i) => <circle key={i} cx={x} cy={y} r="1" fill="#7fbd9c" />)}</Svg>
                  </ThumbFrame>
                  <ThumbLabels $cols={1}>封底 - 封面</ThumbLabels>
                </ThumbItem>
                <ThumbItem $w={53}>
                  <ThumbFrame $cols={1} />
                  <ThumbLabels $cols={1}>1</ThumbLabels>
                </ThumbItem>
                {[2, 4, 6, 8, 10, 12, 14].map((n) => (
                  <ThumbItem key={n} $w={105}>
                    <ThumbFrame $cols={2}><span /><span /></ThumbFrame>
                    <ThumbLabels $cols={2}><span>{n}</span><span>{n + 1}</span></ThumbLabels>
                  </ThumbItem>
                ))}
              </Thumbs>
              <HScroll>
                <Svg w={4} h={7}><path d="M4 0v7L0 3.500z" fill="#44454b" /></Svg>
                <HThumb><Grip /></HThumb>
                <Svg w={4} h={7}><path d="M0 0v7l4-3.500z" fill="#44454b" /></Svg>
              </HScroll>
            </StripBody>
          </Strip>
        </MainColumn>
      </Workspace>

      <Watermark>
        <MarkRow>
          <span>Bai</span>
          <svg width="50" height="58" viewBox="0 0 50 58">
            <g fill="#fff" fillOpacity=".75" stroke="#bfc2ca" strokeOpacity=".6">
              <ellipse cx="6.500" cy="22" rx="6" ry="8.500" />
              <ellipse cx="19" cy="10" rx="6" ry="9" />
              <ellipse cx="34" cy="11" rx="6" ry="8.500" transform="rotate(8 34 11)" />
              <ellipse cx="44" cy="26" rx="6" ry="8" transform="rotate(12 44 26)" />
              <path d="M25 24c8 0 10 8 15 14 6 6 8 18-4 19-6 .5-16-1-22 0C1 58 0 46 6 40c7-6 10-16 19-16z" />
            </g>
            <text x="25" y="52" fontSize="24" fontWeight="700" fontFamily="Liberation Sans" textAnchor="middle" fill="#fff" stroke="#c3c6ce" strokeWidth="1">du</text>
          </svg>
          <MarkCjk>经验</MarkCjk>
        </MarkRow>
        <MarkUrl>jingyan.baidu.com</MarkUrl>
      </Watermark>

      <Palette>
        <PaletteHead><button aria-label="close"><Svg w={8}><path d="M1 1l6 6M7 1L1 7" stroke="#fff" strokeWidth="1.500" /></Svg></button></PaletteHead>
        <PaletteList>
          {paletteItems.map(([id, label]) => (
            <PaletteItem key={id}>{palette[id]}<span>{label}</span></PaletteItem>
          ))}
        </PaletteList>
      </Palette>

      <EdgeWidget>
        <EdgeBlock $h={26} $bg="linear-gradient(#5d6470 30%, #2ba6e4 31%)" />
        <EdgeBlock $h={43} $bg="linear-gradient(#4a4b55 50%, #5d7358)" />
      </EdgeWidget>
    </Window>
  );
}
